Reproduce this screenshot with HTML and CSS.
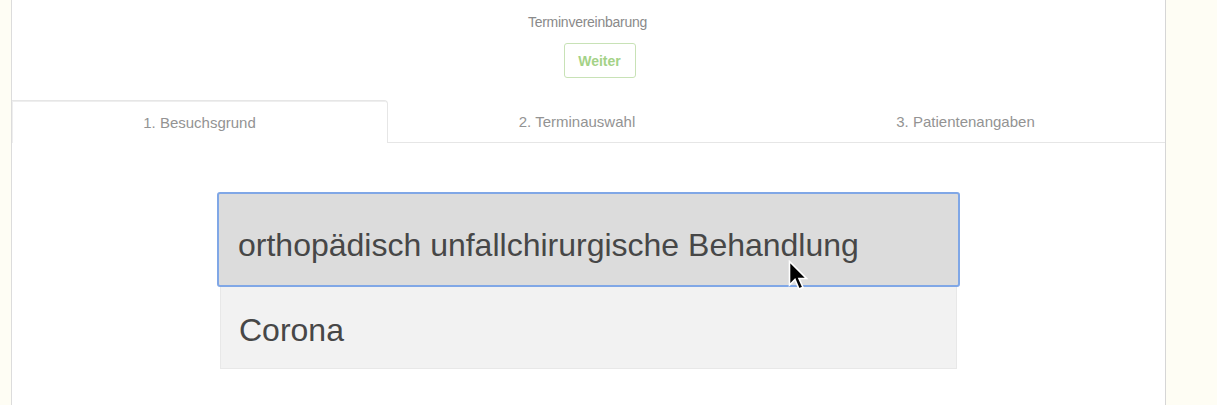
FILE: index.html
```html
<!DOCTYPE html>
<html lang="de">
<head>
<meta charset="utf-8">
<title>Terminvereinbarung</title>
<link rel="stylesheet" href="styles.css">
</head>
<body>
<div class="page">
  <header class="head">
    <div class="title">Terminvereinbarung</div>
    <button class="next">Weiter</button>
  </header>
  <nav class="tabs">
    <div class="tab active">1. Besuchsgrund</div>
    <div class="tab t2">2. Terminauswahl</div>
    <div class="tab t3">3. Patientenangaben</div>
  </nav>
  <div class="options">
    <div class="option selected">orthopädisch unfallchirurgische Behandlung
      <svg class="cursor" width="22" height="34" viewBox="0 0 22 34"><path d="M1.5 1.5 L1.5 25 L7 19.5 L11 29 L15 27.3 L11 18.5 L18.5 18.5 Z" fill="#000" stroke="#fff" stroke-width="1.6" stroke-linejoin="miter"/></svg>
    </div>
    <div class="option">Corona</div>
  </div>
</div>
</body>
</html>
```
FILE: styles.css
```css
html, body { margin: 0; padding: 0; }
body {
  background: #fefdf4;
  font-family: "Liberation Sans", Arial, sans-serif;
  height: 405px;
  overflow: hidden;
}
.page {
  margin: 0 51px 0 11px;
  border-left: 1px solid #dcdcdc;
  border-right: 1px solid #d6d6d6;
  background: #fff;
  height: 405px;
  box-sizing: border-box;
}
.head {
  display: flex;
  flex-direction: column;
  align-items: center;
  padding-top: 14px;
}
.title {
  font-size: 14px;
  color: #8a8a8a;
  letter-spacing: -0.25px;
  line-height: 16px;
  margin-left: -2px;
}
.next {
  margin-top: 13px;
  margin-left: 22px;
  width: 72px;
  height: 35px;
  border: 1px solid #c8e2b6;
  border-radius: 3px;
  background: #fff;
  color: #a4d287;
  font-family: "Liberation Sans", Arial, sans-serif;
  font-size: 14px;
  font-weight: bold;
  padding: 0;
}
.tabs {
  display: flex;
  margin-top: 22px;
  height: 43px;
}
.tab {
  box-sizing: border-box;
  display: flex;
  align-items: center;
  justify-content: center;
  font-size: 15px;
  color: #939393;
  border-bottom: 1px solid #e6e6e6;
  padding-top: 1px;
}
.tab.active {
  width: 376px;
  border: 1px solid #e6e6e6;
  border-bottom: none;
  border-left: none;
  border-radius: 0 4px 0 0;
  box-shadow: inset 1px 1px 0 #eee;
}
.tab.t2 { width: 378px; }
.tab.t3 { flex: 1; }
.options {
  margin: 49px 0 0 205px;
  width: 743px;
}
.option {
  box-sizing: border-box;
  height: 82px;
  margin: 0 3px;
  padding-left: 18px;
  padding-top: 5px;
  display: flex;
  align-items: center;
  font-size: 32px;
  color: #474747;
  background: #f2f2f2;
  border: 1px solid #e8e8e8;
  border-top: none;
}
.option.selected {
  position: relative;
  margin: 0;
  height: 95px;
  padding-left: 19px;
  padding-top: 12px;
  background: #dcdcdc;
  border: 2px solid #80a7e6;
  border-radius: 3px;
}
.cursor {
  position: absolute;
  left: 569px;
  top: 66px;
}
```
